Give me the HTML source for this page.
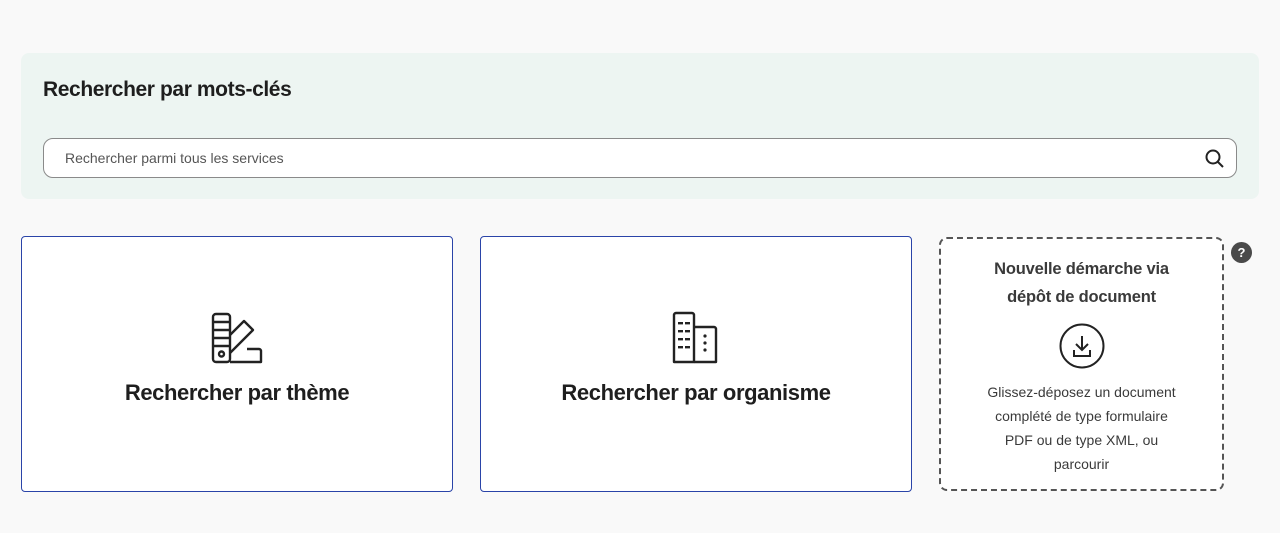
<!DOCTYPE html>
<html><head><meta charset="utf-8"><style>
*{box-sizing:border-box;margin:0;padding:0}
body{width:1280px;height:533px;background:#f9f9f9;font-family:"Liberation Sans",sans-serif;color:#1e1e1e;position:relative;overflow:hidden}
.panel{position:absolute;left:21px;top:53px;width:1238px;height:146px;background:#edf5f2;border-radius:8px}
.panel h2{position:absolute;left:22px;top:25px;font-size:21px;font-weight:bold;letter-spacing:-0.4px}
.search{position:absolute;left:22px;top:85px;width:1194px;height:40px;background:#fff;border:1px solid #8a8a8a;border-radius:10px}
.search span{position:absolute;left:21px;top:11px;font-size:14px;color:#555}
.search svg{position:absolute;right:10px;top:9px}
.card{position:absolute;top:236px;width:432px;height:256px;background:#fff;border:1px solid #2a44a8;border-radius:4px;text-align:center}
.card svg{position:absolute;left:50%;transform:translateX(-50%);top:74px}
.card div{position:absolute;left:0;right:0;top:143px;font-size:22px;font-weight:bold;letter-spacing:-0.4px}
.drop{position:absolute;left:939px;top:237px;width:285px;height:254px;border:2px dashed #555;border-radius:8px;background:#fff;text-align:center;color:#3a3a3a}
.drop h3{margin-top:16px;font-size:16.5px;line-height:28px;font-weight:bold;letter-spacing:-0.2px}
.drop p{position:absolute;left:0;right:0;top:141px;font-size:14px;line-height:24px;padding:0 40px}
.help{position:absolute;left:1231px;top:242px;width:21px;height:21px;border-radius:50%;background:#4a4a4a;color:#fff;font-size:13px;font-weight:bold;text-align:center;line-height:21px}
</style></head><body>
<div class="panel"><h2>Rechercher par mots-clés</h2>
<div class="search"><span>Rechercher parmi tous les services</span>
<svg width="22" height="22" viewBox="0 0 22 22" fill="none" stroke="#222" stroke-width="2"><circle cx="9" cy="9" r="6.5"/><path d="M14 14l5 5"/></svg></div></div>

<div class="card" style="left:21px">
<svg width="54" height="54" viewBox="0 0 54 54" fill="none" stroke="#222" stroke-width="2.4" stroke-linejoin="round">
<rect x="3" y="3" width="17" height="48" rx="3"/><path d="M3 11h17M3 19h17M3 27h17M3 35h17"/><circle cx="11.5" cy="43" r="2.5"/>
<path d="M20 24l14-14 9 9-23 23"/><path d="M20 51h31V40a2 2 0 0 0-2-2H37"/></svg>
<div>Rechercher par thème</div></div>

<div class="card" style="left:480px">
<svg width="54" height="54" viewBox="0 0 54 54" fill="none" stroke="#222" stroke-width="2.4" stroke-linejoin="round">
<path d="M5 51V4a2 2 0 0 1 2-2h16a2 2 0 0 1 2 2v47z"/><path d="M25 16h20a2 2 0 0 1 2 2v33H25"/>
<g fill="#222" stroke="none">
<rect x="9" y="11" width="5" height="2.4"/><rect x="16" y="11" width="5" height="2.4"/>
<rect x="9" y="19" width="5" height="2.4"/><rect x="16" y="19" width="5" height="2.4"/>
<rect x="9" y="27" width="5" height="2.4"/><rect x="16" y="27" width="5" height="2.4"/>
<rect x="9" y="35" width="5" height="2.4"/><rect x="16" y="35" width="5" height="2.4"/>
<circle cx="36" cy="25" r="1.6"/><circle cx="36" cy="32" r="1.6"/><circle cx="36" cy="39" r="1.6"/></g></svg>
<div>Rechercher par organisme</div></div>

<div class="drop"><h3>Nouvelle démarche via<br>dépôt de document</h3>
<svg style="position:absolute;left:118px;top:84px" width="46" height="46" viewBox="0 0 46 46" fill="none" stroke="#222" stroke-width="2"><circle cx="23" cy="23" r="21.5"/><path d="M23 13v14M17 21l6 6 6-6M15 27v6h16v-6"/></svg>
<p>Glissez-déposez un document complété de type formulaire PDF ou de type XML, ou parcourir</p></div>
<div class="help">?</div>
</body></html>
